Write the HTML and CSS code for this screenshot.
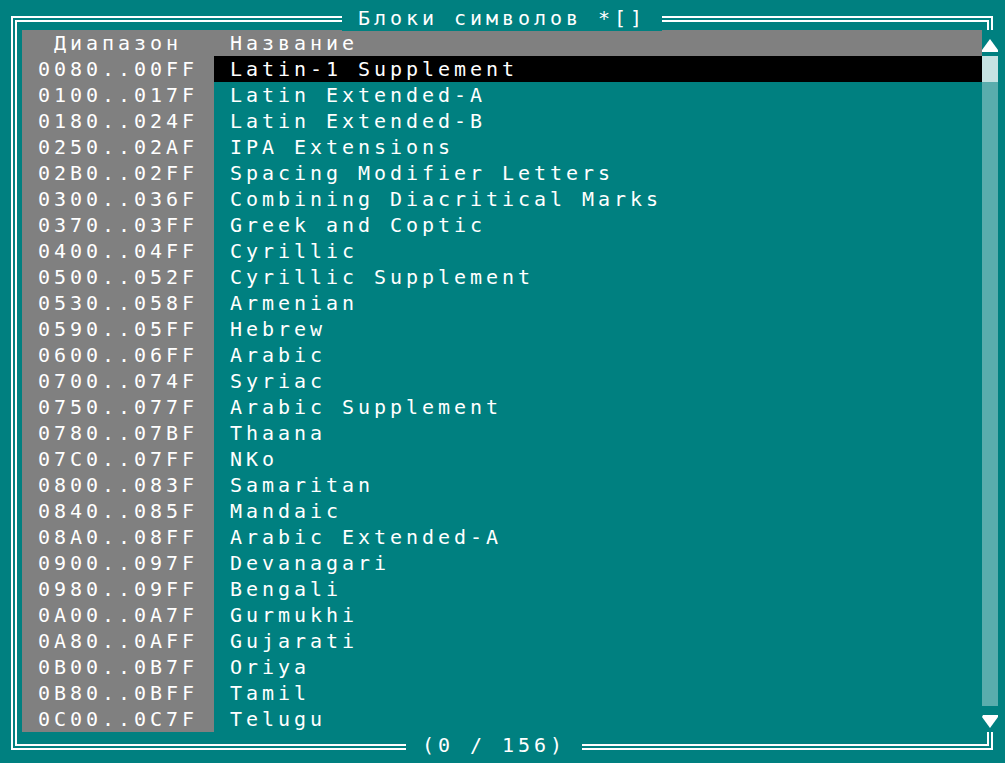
FILE: index.html
```html
<!DOCTYPE html>
<html lang="ru">
<head>
<meta charset="utf-8">
<title>Блоки символов</title>
<link rel="stylesheet" href="styles.css">
</head>
<body>
<div class="screen">
  <div class="frame">
    <div class="title">Блоки символов *[]</div>
    <div class="panel">
      <div class="list">
        <div class="cell head range-head">Диапазон</div>
        <div class="cell head name">Название</div>

        <div class="cell range">0080..00FF</div><div class="cell name selected">Latin-1 Supplement</div>
        <div class="cell range">0100..017F</div><div class="cell name">Latin Extended-A</div>
        <div class="cell range">0180..024F</div><div class="cell name">Latin Extended-B</div>
        <div class="cell range">0250..02AF</div><div class="cell name">IPA Extensions</div>
        <div class="cell range">02B0..02FF</div><div class="cell name">Spacing Modifier Letters</div>
        <div class="cell range">0300..036F</div><div class="cell name">Combining Diacritical Marks</div>
        <div class="cell range">0370..03FF</div><div class="cell name">Greek and Coptic</div>
        <div class="cell range">0400..04FF</div><div class="cell name">Cyrillic</div>
        <div class="cell range">0500..052F</div><div class="cell name">Cyrillic Supplement</div>
        <div class="cell range">0530..058F</div><div class="cell name">Armenian</div>
        <div class="cell range">0590..05FF</div><div class="cell name">Hebrew</div>
        <div class="cell range">0600..06FF</div><div class="cell name">Arabic</div>
        <div class="cell range">0700..074F</div><div class="cell name">Syriac</div>
        <div class="cell range">0750..077F</div><div class="cell name">Arabic Supplement</div>
        <div class="cell range">0780..07BF</div><div class="cell name">Thaana</div>
        <div class="cell range">07C0..07FF</div><div class="cell name">NKo</div>
        <div class="cell range">0800..083F</div><div class="cell name">Samaritan</div>
        <div class="cell range">0840..085F</div><div class="cell name">Mandaic</div>
        <div class="cell range">08A0..08FF</div><div class="cell name">Arabic Extended-A</div>
        <div class="cell range">0900..097F</div><div class="cell name">Devanagari</div>
        <div class="cell range">0980..09FF</div><div class="cell name">Bengali</div>
        <div class="cell range">0A00..0A7F</div><div class="cell name">Gurmukhi</div>
        <div class="cell range">0A80..0AFF</div><div class="cell name">Gujarati</div>
        <div class="cell range">0B00..0B7F</div><div class="cell name">Oriya</div>
        <div class="cell range">0B80..0BFF</div><div class="cell name">Tamil</div>
        <div class="cell range">0C00..0C7F</div><div class="cell name">Telugu</div>
      </div>
      <div class="scrollbar">
        <div class="arrow arrow-up">
          <svg width="16" height="13" viewBox="0 0 16 13"><polygon points="8,0 16,11 16,13 0,13 0,11" fill="#fff"/></svg>
        </div>
        <div class="thumb"></div>
        <div class="track"></div>
        <div class="arrow arrow-down">
          <svg width="16" height="13" viewBox="0 0 16 13"><polygon points="1,0 16,0 16,2 8,13 0,2" fill="#fff"/></svg>
        </div>
      </div>
    </div>
    <div class="footer">(0 / 156)</div>
  </div>
</div>
</body>
</html>
```
FILE: styles.css
```css
html, body {
  margin: 0;
  padding: 0;
  background: #008080;
}

body {
  width: 1005px;
  height: 763px;
  overflow: hidden;
  font-family: "DejaVu Sans Mono", "Liberation Mono", monospace;
  font-size: 20px;
  letter-spacing: 3.96px;
  color: #ffffff;
}

.screen {
  padding: 4px 0 0 6px;
}

.frame {
  position: relative;
  box-sizing: border-box;
  width: 982px;
  height: 734px;
  margin: 12px 0 0 5px;
  border: 6px double #ffffff;
  padding: 8px 0 0 5px;
}

.title,
.footer {
  position: absolute;
  background: #008080;
  line-height: 26px;
  height: 26px;
  padding: 0 16px;
  white-space: pre;
}

.title {
  left: 325px;
  top: -17px;
  width: 288px;
}

.footer {
  left: 389px;
  top: 710px;
  width: 144px;
}

.panel {
  display: flex;
  width: 976px;
  height: 702px;
}

.list {
  display: grid;
  grid-template-columns: 192px 768px;
  grid-auto-rows: 26px;
  width: 960px;
  align-content: start;
}

.cell {
  line-height: 26px;
  white-space: pre;
  padding-left: 16px;
  overflow: hidden;
}

.head {
  background: #808080;
}

.range-head {
  padding-left: 32px;
}

.range {
  background: #808080;
}

.selected {
  background: #000000;
}

.scrollbar {
  display: flex;
  flex-direction: column;
  width: 16px;
  position: relative;
  z-index: 1;
}

.arrow {
  height: 26px;
  box-sizing: border-box;
  background: #008080;
  padding-top: 9px;
}

.arrow svg {
  display: block;
}

.thumb {
  height: 26px;
  background: #c6e2e2;
}

.track {
  flex: 1;
  background: #5aadad;
}
```
